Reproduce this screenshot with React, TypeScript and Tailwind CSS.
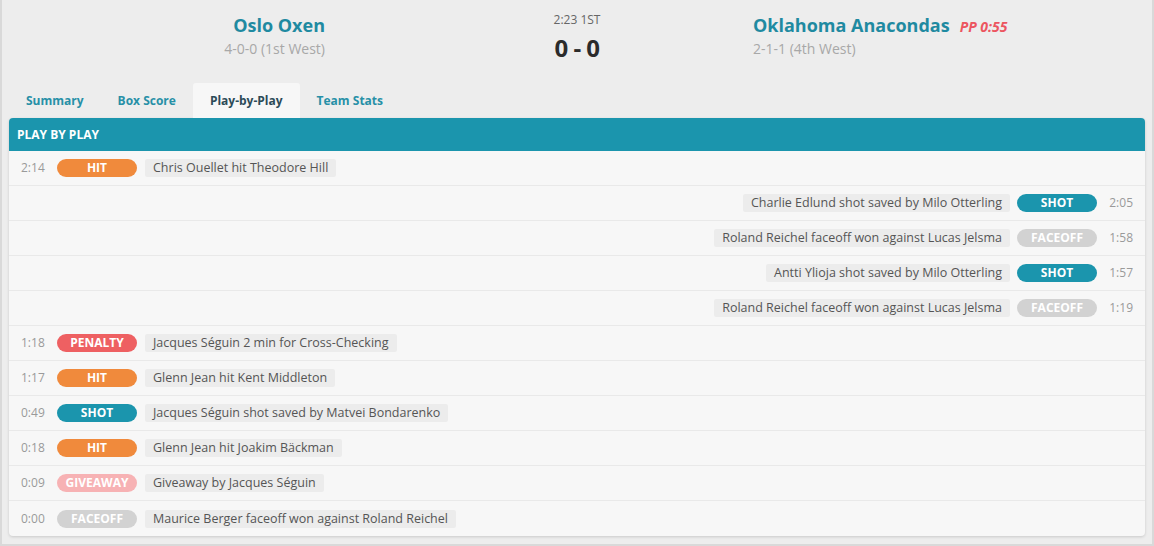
import React from "react";

type Kind = "HIT" | "SHOT" | "FACEOFF" | "PENALTY" | "GIVEAWAY";

const badgeClass: Record<Kind, string> = {
  HIT: "bg-[#f08a3c]",
  SHOT: "bg-[#1b95ad]",
  FACEOFF: "bg-[#d2d2d2]",
  PENALTY: "bg-[#ee6062]",
  GIVEAWAY: "bg-[#f7b2b4]",
};

const plays: { time: string; kind: Kind; text: string; away?: boolean }[] = [
  { time: "2:14", kind: "HIT", text: "Chris Ouellet hit Theodore Hill" },
  { time: "2:05", kind: "SHOT", text: "Charlie Edlund shot saved by Milo Otterling", away: true },
  { time: "1:58", kind: "FACEOFF", text: "Roland Reichel faceoff won against Lucas Jelsma", away: true },
  { time: "1:57", kind: "SHOT", text: "Antti Ylioja shot saved by Milo Otterling", away: true },
  { time: "1:19", kind: "FACEOFF", text: "Roland Reichel faceoff won against Lucas Jelsma", away: true },
  { time: "1:18", kind: "PENALTY", text: "Jacques Séguin 2 min for Cross-Checking" },
  { time: "1:17", kind: "HIT", text: "Glenn Jean hit Kent Middleton" },
  { time: "0:49", kind: "SHOT", text: "Jacques Séguin shot saved by Matvei Bondarenko" },
  { time: "0:18", kind: "HIT", text: "Glenn Jean hit Joakim Bäckman" },
  { time: "0:09", kind: "GIVEAWAY", text: "Giveaway by Jacques Séguin" },
  { time: "0:00", kind: "FACEOFF", text: "Maurice Berger faceoff won against Roland Reichel" },
];

const tabs = ["Summary", "Box Score", "Play-by-Play", "Team Stats"];

function Badge({ kind }: { kind: Kind }) {
  return (
    <span
      className={`flex h-[18px] w-[80px] shrink-0 items-center justify-center rounded-full text-[12px] font-bold leading-none text-white ${badgeClass[kind]}`}
    >
      {kind}
    </span>
  );
}

function PlayRow({ time, kind, text, away }: (typeof plays)[number]) {
  const timeEl = (
    <span className={`w-[36px] shrink-0 text-[12px] text-[#9a9a9a] ${away ? "text-right" : ""}`}>{time}</span>
  );
  return (
    <div className="flex h-[35px] items-center border-b border-[#e9e9e9] px-3 last:border-b-0">
      {away ? (
        <div className="flex w-full items-center justify-end">
          <span className="block rounded-[2px] bg-[#ececec] px-2 text-[12.5px] leading-[18px] text-[#555]">{text}</span>
          <span className="ml-[7px] flex">
            <Badge kind={kind} />
          </span>
          {timeEl}
        </div>
      ) : (
        <div className="flex items-center">
          {timeEl}
          <Badge kind={kind} />
          <span className="ml-2 block rounded-[2px] bg-[#ececec] px-2 text-[12.5px] leading-[18px] text-[#555]">{text}</span>
        </div>
      )}
    </div>
  );
}

export default function App() {
  return (
    <div
      className="h-[546px] w-[1154px] overflow-hidden border-x-2 border-b-2 border-[#d9d9d9] bg-[#ededed] px-[7px]"
      style={{ fontFamily: '"Open Sans", "Noto Sans", sans-serif' }}
    >
      {/* Scoreboard */}
      <div className="flex h-[83px] pt-3">
        <div className="w-[316px] shrink-0 text-right">
          <div className="text-[18px] font-bold leading-[26px] text-[#1f8aa1]">Oslo Oxen</div>
          <div className="mt-px text-[14px] leading-[20px] text-[#a8a8a8]">4-0-0 (1st West)</div>
        </div>
        <div className="ml-[192px] w-[120px] shrink-0 text-center">
          <div className="text-[12px] leading-[16px] text-[#666]">2:23 1ST</div>
          <div className="mt-[5px] text-[24px] font-bold leading-[30px] tracking-[-0.5px] text-[#2b2b2b]">0 - 0</div>
        </div>
        <div className="ml-[116px]">
          <div className="flex items-baseline gap-[10px]">
            <span className="text-[18px] font-bold leading-[26px] text-[#1f8aa1]">Oklahoma Anacondas</span>
            <span className="text-[14px] font-bold italic text-[#ec5560]">PP 0:55</span>
          </div>
          <div className="mt-px text-[14px] leading-[20px] text-[#a8a8a8]">2-1-1 (4th West)</div>
        </div>
      </div>

      {/* Tabs */}
      <div className="flex h-[35px]">
        {tabs.map((t) => (
          <div
            key={t}
            className={`flex items-center rounded-t-[3px] px-[17px] text-[12px] font-bold ${
              t === "Play-by-Play" ? "bg-[#f7f7f7] text-[#2c4b57]" : "text-[#2790a7]"
            }`}
          >
            {t}
          </div>
        ))}
      </div>

      {/* Card */}
      <div className="overflow-hidden rounded-[4px] bg-[#f7f7f7] shadow-[0_1px_3px_rgba(0,0,0,0.15)]">
        <div className="flex h-[33px] items-center bg-[#1b95ad] px-2 text-[12px] font-bold text-white">PLAY BY PLAY</div>
        {plays.map((p, i) => (
          <PlayRow key={i} {...p} />
        ))}
      </div>
    </div>
  );
}
